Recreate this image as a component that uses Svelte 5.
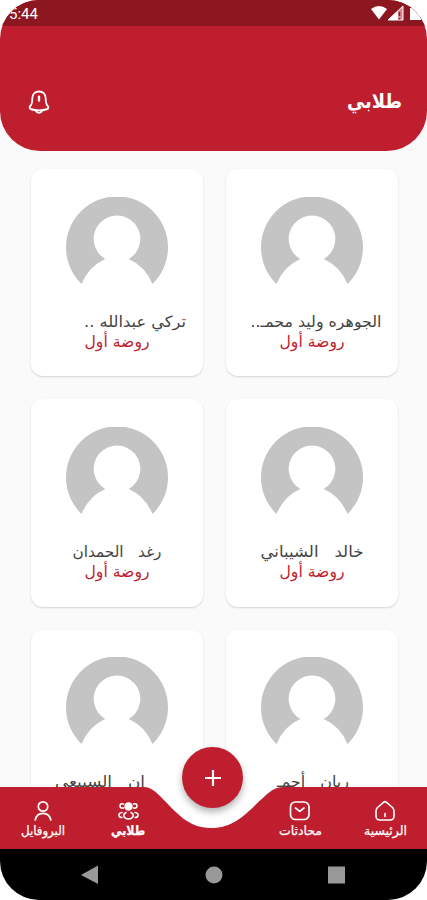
<script>
  const students = [
    { name: 'الجوهره وليد محمـ..', w: 131, x: 90 },
    { name: 'تركي عبدالله ..', w: 102, x: 104 },
    { name: 'خالد\u00a0\u00a0 الشيباني', w: 103, x: 86 },
    { name: 'رغد\u00a0\u00a0 الحمدان', w: 89, x: 86 },
    { name: 'ريان\u00a0\u00a0 أحمـ', w: 72, x: 87 },
    { name: 'ان\u00a0\u00a0 السبيعي', w: 90, x: 69 }
  ];
</script>

{#snippet label(text, w, h, size, base, cls)}
  <svg class={cls} width={w} height={h} overflow="visible">
    <text x={w / 2} y={base} font-size={size} textLength={w} lengthAdjust="spacingAndGlyphs" text-anchor="middle" direction="rtl">{text}</text>
  </svg>
{/snippet}

<div class="phone">
  <div class="top">
    <div class="status">
      <span>5:44</span>
      <svg width="56" height="26" viewBox="0 0 56 26">
        <path d="M0 9Q8 3 16 9L8 19.500Z" fill="#fff" />
        <path d="M32 6V20H17Z" fill="#d9898f" />
        <path d="M27 11V20H17Z" fill="#fff" />
        <path d="M32 6V20H17Z" fill="none" stroke="#fff" stroke-width="1" />
        <path d="M28.500 12v4M28.500 18v1.500" stroke="#8d1720" stroke-width="1.500" />
        <path d="M39 8h2V6h6v2h3v12H39Z" fill="#fff" />
      </svg>
    </div>
    <header>
      <svg class="bell" width="22" height="25" viewBox="0 0 24 26" preserveAspectRatio="none" fill="none" stroke="#fff" stroke-width="2" stroke-linejoin="round" stroke-linecap="round">
        <path d="M12 1.500C7.500 1.500 4.700 4.600 4.700 8.800c0 4.500-.4 6-2.200 7.800-1.200 1.200-.7 3 1 3.400 5 1.400 12 1.400 17 0 1.700-.4 2.200-2.200 1-3.400-1.800-1.800-2.200-3.300-2.200-7.800C19.300 4.600 16.500 1.500 12 1.500ZM8.500 21.500c1.200 3 5.800 3 7 0" />
        <path d="M12 7v4" stroke-width="2.600" />
      </svg>
      {@render label('طلابي', 55, 26, 20, 18, 'title')}
    </header>
  </div>

  <main>
    {#each students as s}
      <article>
        <svg class="avatar" width="102" height="87" viewBox="0 0 102 87">
          <path d="M15.500 87A51 51 0 1 1 86.500 87Q79 69 62.700 62A23.300 23.300 0 1 0 39.300 62Q23 69 15.500 87Z" fill="#c4c4c4" />
        </svg>
        <svg class="lines" width="172" height="52">
          <text class="name" x={s.x} y="19" font-size="15.500" textLength={s.w} lengthAdjust="spacingAndGlyphs" text-anchor="middle" direction="rtl">{s.name}</text>
          <text class="grade" x="86" y="39" font-size="15.500" textLength="65" lengthAdjust="spacingAndGlyphs" text-anchor="middle" direction="rtl">روضة أول</text>
        </svg>
      </article>
    {/each}
  </main>

  <nav>
    <svg class="wave" width="427" height="62" viewBox="0 0 427 62">
      <path d="M140 0H288L262 38L211 44L170 36Z" fill="#fff" />
      <path d="M0 0H144C150 0 155 4 160 9C177 26 188 41 211 41C236 41 248 24 264 10C270 4 276 0 283 0H427V62H0Z" fill="#be1e2d" />
    </svg>
    <button class="fab" aria-label="+">
      <svg width="16" height="16" viewBox="0 0 16 16"><path d="M8 0V16M0 8H16" stroke="#fff" stroke-width="2.200" /></svg>
    </button>
    <div class="tabs">
      <div class="tab">
        <svg width="22" height="22" viewBox="0 0 22 22" fill="none" stroke="#fff" stroke-width="1.600" stroke-linejoin="round" stroke-linecap="round"><path d="M3.500 7.500L9.500 2.300Q11 1 12.500 2.300L18.500 7.500Q20 9 20 11.500V16Q20 20 16 20H6Q2 20 2 16V11.500Q2 9 3.500 7.500ZM11 13.500v3" /></svg>
        {@render label('الرئيسية', 43, 16, 12.5, 12, 'tl')}
      </div>
      <div class="tab">
        <svg width="22" height="22" viewBox="0 0 22 22" fill="none" stroke="#fff" stroke-width="1.700" stroke-linejoin="round" stroke-linecap="round"><rect x="1.500" y="2" width="18.500" height="17.500" rx="5" /><path d="M6.500 8L10.800 11.300L15 8" /></svg>
        {@render label('محادثات', 43, 16, 12.5, 12, 'tl')}
      </div>
      <div class="tab active">
        <svg width="22" height="22" viewBox="0 0 22 22" fill="none" stroke="#fff" stroke-width="1.600" stroke-linecap="round"><circle cx="11.500" cy="6.500" r="4.200" fill="#fff" stroke="none" /><path d="M6.500 4Q3 3 3 6Q3 8.500 6.500 8M16.500 4Q20 3 20 6Q20 8.500 16.500 8M5 12.500Q1.500 13 2 15.500Q2.500 17.500 5 17.500M18 12.500Q21.500 13 21 15.500Q20.500 17.500 18 17.500M9 12.500Q6 14 7 16.500Q8 19 11.500 19T16 16.500Q17 14 14 12.500" /></svg>
        {@render label('طلابي', 34, 16, 13, 12, 'tl')}
      </div>
      <div class="tab">
        <svg width="22" height="22" viewBox="0 0 22 22" fill="none" stroke="#fff" stroke-width="1.700" stroke-linecap="round"><circle cx="11" cy="6.500" r="4.700" /><path d="M3.200 20Q4.500 13.300 11 13.300T18.800 20" /></svg>
        {@render label('البروفايل', 44, 16, 12.5, 12, 'tl')}
      </div>
    </div>
  </nav>
  <div class="system">
    <svg width="427" height="51" viewBox="0 0 427 51" fill="#999"><path d="M81 26L98 16.500V35Z" /><circle cx="214" cy="26" r="8.500" /><rect x="328" y="17.500" width="17" height="17" /></svg>
  </div>
</div>

<style>
  :global(body) { background: #fff; }
  .phone { width: 427px; height: 900px; overflow: hidden; border-radius: 39px; background: #fafafa; display: flex; flex-direction: column; font-family: "DejaVu Sans", sans-serif; }
  .top { height: 151px; background: #be1e2d; border-radius: 0 0 40px 40px; flex: none; }
  .status { height: 26px; background: #8d1720; display: flex; justify-content: space-between; color: #fff; font: 15px/28px Roboto, sans-serif; padding-left: 9px; }
  header { display: flex; justify-content: space-between; padding: 64px 25px 0 28px; }
  .title { fill: #fff; font-weight: bold; }
  main { height: 636px; flex: none; overflow: hidden; display: grid; grid-template-columns: 172px 172px; gap: 23px; direction: rtl; padding: 18px 29px 0 31px; box-sizing: border-box; grid-auto-rows: 207.300px; }
  article { background: #fff; border-radius: 12px; box-shadow: 0 1px 2px rgba(0, 0, 0, .16); display: flex; flex-direction: column; align-items: center; padding-top: 27.500px; box-sizing: border-box; }
  .avatar { flex: none; }
  .lines { flex: none; margin-top: 24px; direction: ltr; }
  .name { fill: #444; }
  .grade { fill: #be1e2d; }
  nav { height: 62px; flex: none; position: relative; }
  .wave { position: absolute; left: 0; top: 0; }
  .fab { position: absolute; left: 182px; top: -40px; width: 61px; height: 61px; border: 0; padding: 0; border-radius: 50%; background: #be1e2d; box-shadow: 0 4px 7px rgba(0, 0, 0, .3); display: grid; place-items: center; }
  .tabs { position: relative; display: flex; justify-content: space-between; flex-direction: row-reverse; padding: 13px 20px 0 21px; }
  .tab { display: flex; flex-direction: column; align-items: center; width: 44px; }
  .tl { fill: #fff; stroke: #fff; stroke-width: .25; margin-top: 1px; }
  .active { font-weight: bold; margin-right: 87px; }
  .system { background: #000; height: 51px; }
  .system svg { display: block; }
</style>
